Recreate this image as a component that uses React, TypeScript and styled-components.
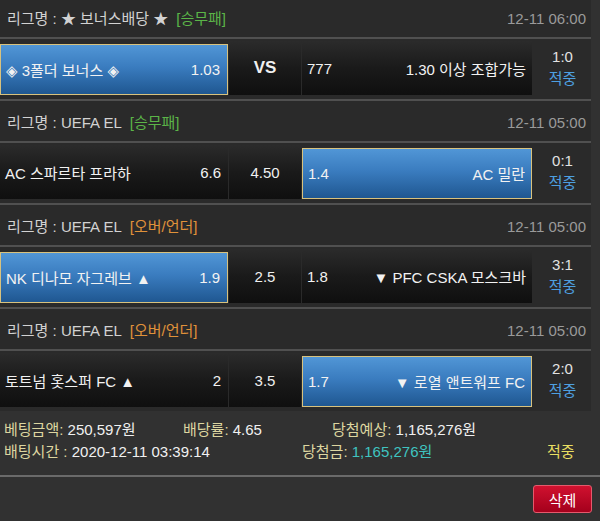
import React from "react";
import styled, { createGlobalStyle, css } from "styled-components";

const GlobalStyle = createGlobalStyle`
  html, body {
    margin: 0;
    padding: 0;
    background: #313131;
  }
  body {
    font-family: "Liberation Sans", "Noto Sans CJK KR", "DejaVu Sans", sans-serif;
    font-size: 15px;
    color: #e6e6e6;
    overflow: hidden;
  }
  * { box-sizing: border-box; }
`;

type Pick = "home" | "away";
type TagKind = "wdl" | "ou";

interface Game {
  league: string;
  tag: string;
  tagKind: TagKind;
  time: string;
  home: string;
  homeOdds: string;
  draw: string;
  drawBold?: boolean;
  away: string;
  awayOdds: string;
  pick: Pick;
  score: string;
}

const games: Game[] = [
  {
    league: "★ 보너스배당 ★",
    tag: "[승무패]",
    tagKind: "wdl",
    time: "12-11 06:00",
    home: "◈ 3폴더 보너스 ◈",
    homeOdds: "1.03",
    draw: "VS",
    drawBold: true,
    away: "1.30 이상 조합가능",
    awayOdds: "777",
    pick: "home",
    score: "1:0",
  },
  {
    league: "UEFA EL",
    tag: "[승무패]",
    tagKind: "wdl",
    time: "12-11 05:00",
    home: "AC 스파르타 프라하",
    homeOdds: "6.6",
    draw: "4.50",
    away: "AC 밀란",
    awayOdds: "1.4",
    pick: "away",
    score: "0:1",
  },
  {
    league: "UEFA EL",
    tag: "[오버/언더]",
    tagKind: "ou",
    time: "12-11 05:00",
    home: "NK 디나모 자그레브 ▲",
    homeOdds: "1.9",
    draw: "2.5",
    away: "▼ PFC CSKA 모스크바",
    awayOdds: "1.8",
    pick: "home",
    score: "3:1",
  },
  {
    league: "UEFA EL",
    tag: "[오버/언더]",
    tagKind: "ou",
    time: "12-11 05:00",
    home: "토트넘 홋스퍼 FC ▲",
    homeOdds: "2",
    draw: "3.5",
    away: "▼ 로열 앤트워프 FC",
    awayOdds: "1.7",
    pick: "away",
    score: "2:0",
  },
];

const Page = styled.div`
  width: 600px;
  height: 521px;
  display: flex;
  flex-direction: column;
  background: #313131;
`;

const GameList = styled.div`
  width: 591px;
  margin-top: -3px;
  display: flex;
  flex-direction: column;
`;

const Block = styled.section`
  display: flex;
  flex-direction: column;
  background: #2a2a2a;
`;

const LeagueHeader = styled.div`
  height: 42px;
  padding: 3px 5px 0 7px;
  display: flex;
  align-items: center;
  justify-content: space-between;
  border-bottom: 2px solid #505050;
  line-height: 18px;
`;

const LeagueName = styled.div`
  color: #d2d2d2;
  white-space: nowrap;
`;

const Tag = styled.span<{ $kind: TagKind }>`
  margin-left: 8px;
  color: ${(p) => (p.$kind === "wdl" ? "#5bb548" : "#e0923a")};
`;

const Time = styled.div`
  color: #9a9a9a;
`;

const MatchRow = styled.div<{ $last?: boolean }>`
  height: ${(p) => (p.$last ? "60px" : "62px")};
  padding: 2px 0 4px;
  display: grid;
  grid-template-columns: 228px 72px 230px 59px;
  column-gap: 1px;
  ${(p) => !p.$last && css`border-bottom: 2px solid #505050;`}
`;

const selectedCell = css`
  margin-top: 3px;
  background: linear-gradient(#5196d6 0%, #3a7cbf 45%, #1f5791 100%);
  border: 1px solid #d8c27e;
`;

const darkCell = css`
  background: linear-gradient(#2b2b2b 0%, #1a1a1a 50%, #0f0f0f 100%);
`;

const TeamCell = styled.div<{ $selected: boolean; $side: Pick }>`
  display: flex;
  align-items: center;
  justify-content: space-between;
  padding: ${(p) => (p.$side === "home" ? "0 7px 0 5px" : "0 6px 0 5px")};
  color: #f2f2f2;
  white-space: nowrap;
  ${(p) => (p.$selected ? selectedCell : darkCell)}
`;

const DrawCell = styled.div<{ $bold?: boolean }>`
  display: flex;
  align-items: center;
  justify-content: center;
  color: #f0f0f0;
  ${darkCell}
  ${(p) =>
    p.$bold &&
    css`
      font-weight: bold;
      font-size: 17px;
    `}
`;

const ResultCell = styled.div`
  display: flex;
  flex-direction: column;
  align-items: center;
  justify-content: center;
  gap: 4px;
  line-height: 18px;
`;

const Score = styled.span`
  color: #e2e2e2;
`;

const Hit = styled.span`
  color: #4ea0e0;
`;

const Summary = styled.div`
  padding: 8px 0 12px 4px;
  display: flex;
  flex-direction: column;
  line-height: 22px;
  border-bottom: 2px solid #6a6a6a;
`;

const SummaryRow = styled.div`
  display: flex;
  white-space: nowrap;
`;

const SummaryItem = styled.div<{ $width?: number }>`
  ${(p) => (p.$width ? `width: ${p.$width}px;` : "")}
  flex: none;
`;

const Label = styled.span`
  color: #ddd6a0;
`;

const Value = styled.span<{ $tone?: "teal" }>`
  color: ${(p) => (p.$tone === "teal" ? "#3fc4c0" : "#f0f0f0")};
`;

const Status = styled.span`
  color: #e8df62;
`;

const Footer = styled.div`
  display: flex;
  justify-content: flex-end;
  padding: 8px 8px 0 0;
`;

const DeleteButton = styled.button`
  width: 59px;
  height: 28px;
  border-radius: 3px;
  border: 1px solid #e35a6c;
  background: linear-gradient(#d0112f, #a4001c);
  color: #ffffff;
  font-family: inherit;
  font-size: 15px;
  padding: 0;
  cursor: pointer;
`;

export default function App() {
  return (
    <Page>
      <GlobalStyle />
      <GameList>
        {games.map((g, i) => {
          const last = i === games.length - 1;
          return (
            <Block key={i}>
              <LeagueHeader>
                <LeagueName>
                  리그명 : {g.league}
                  <Tag $kind={g.tagKind}>{g.tag}</Tag>
                </LeagueName>
                <Time>{g.time}</Time>
              </LeagueHeader>
              <MatchRow $last={last}>
                <TeamCell $selected={g.pick === "home"} $side="home">
                  <span>{g.home}</span>
                  <span>{g.homeOdds}</span>
                </TeamCell>
                <DrawCell $bold={g.drawBold}>{g.draw}</DrawCell>
                <TeamCell $selected={g.pick === "away"} $side="away">
                  <span>{g.awayOdds}</span>
                  <span>{g.away}</span>
                </TeamCell>
                <ResultCell>
                  <Score>{g.score}</Score>
                  <Hit>적중</Hit>
                </ResultCell>
              </MatchRow>
            </Block>
          );
        })}
      </GameList>
      <Summary>
        <SummaryRow>
          <SummaryItem $width={179}>
            <Label>베팅금액:</Label> <Value>250,597원</Value>
          </SummaryItem>
          <SummaryItem $width={149}>
            <Label>배당률:</Label> <Value>4.65</Value>
          </SummaryItem>
          <SummaryItem>
            <Label>당첨예상:</Label> <Value>1,165,276원</Value>
          </SummaryItem>
        </SummaryRow>
        <SummaryRow>
          <SummaryItem $width={298}>
            <Label>배팅시간 :</Label> <Value>2020-12-11 03:39:14</Value>
          </SummaryItem>
          <SummaryItem $width={245}>
            <Label>당첨금:</Label> <Value $tone="teal">1,165,276원</Value>
          </SummaryItem>
          <SummaryItem>
            <Status>적중</Status>
          </SummaryItem>
        </SummaryRow>
      </Summary>
      <Footer>
        <DeleteButton>삭제</DeleteButton>
      </Footer>
    </Page>
  );
}
